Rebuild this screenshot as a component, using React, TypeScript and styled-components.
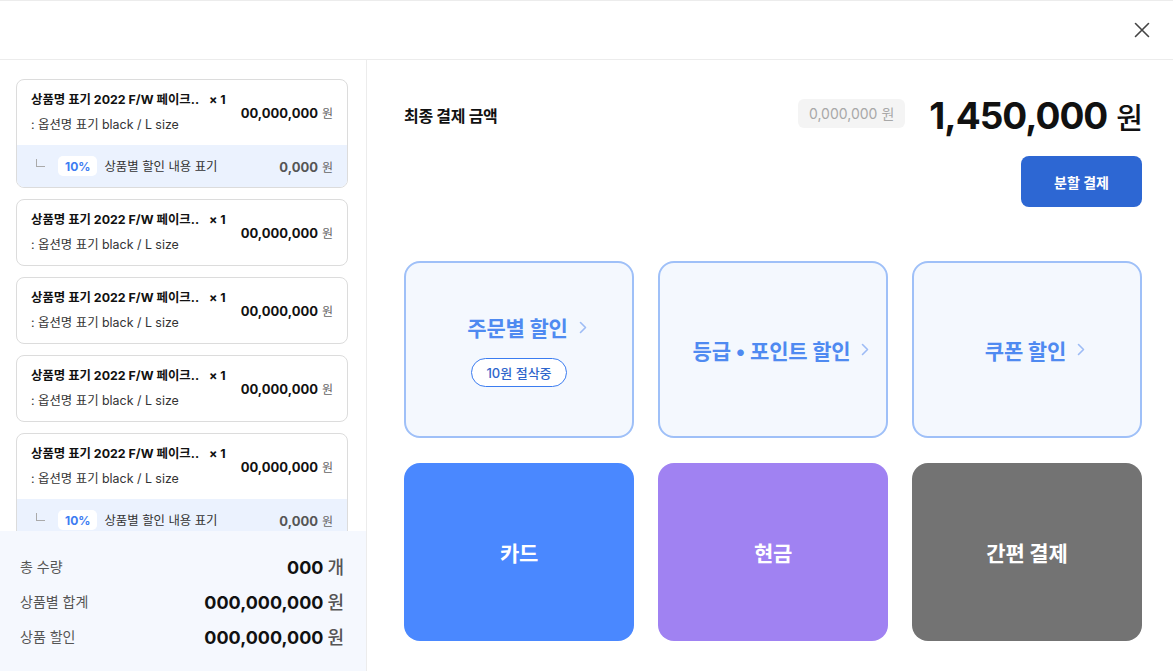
import React from "react";
import styled, { createGlobalStyle } from "styled-components";

const Global = createGlobalStyle`
  * { box-sizing: border-box; }
  html, body { margin: 0; padding: 0; background: #fff; }
  body { font-family: Inter, "Noto Sans CJK KR", sans-serif; color: #111; }
`;

const Page = styled.div`
  width: 1173px;
  height: 671px;
  display: flex;
  flex-direction: column;
  border-top: 1px solid #ececec;
  overflow: hidden;
`;

const Header = styled.header`
  height: 59px;
  flex: 0 0 59px;
  display: flex;
  align-items: center;
  justify-content: flex-end;
  padding-right: 22px;
  border-bottom: 1px solid #ececec;
`;

const CloseBtn = styled.button`
  border: 0;
  background: none;
  padding: 0;
  width: 18px;
  height: 18px;
  display: flex;
  align-items: center;
  justify-content: center;
  cursor: pointer;
`;

const Body = styled.div`
  flex: 1;
  display: flex;
  min-height: 0;
`;

const Left = styled.aside`
  width: 367px;
  flex: 0 0 367px;
  border-right: 1px solid #ececec;
  display: flex;
  flex-direction: column;
`;

const List = styled.div`
  flex: 1;
  overflow: hidden;
  padding: 19px 18px 0 16px;
  display: flex;
  flex-direction: column;
  gap: 11px;
`;

const ItemCard = styled.div`
  flex: 0 0 auto;
  border: 1px solid #dcdcdc;
  border-radius: 8px;
  overflow: hidden;
  background: #fff;
`;

const ItemMain = styled.div`
  height: 65px;
  display: flex;
  align-items: center;
  justify-content: space-between;
  padding: 0 14px 0 14px;
`;

const ItemInfo = styled.div`
  display: flex;
  flex-direction: column;
  gap: 7px;
  margin-top: -2px;
`;

const ItemTitle = styled.div`
  font-size: 12.4px;
  font-weight: 700;
  color: #111;
  white-space: nowrap;
  span { margin-left: 10px; }
`;

const ItemOption = styled.div`
  font-size: 12.4px;
  color: #333;
`;

const Price = styled.div<{ $muted?: boolean }>`
  font-size: 13px;
  font-weight: 700;
  color: ${(p) => (p.$muted ? "#555" : "#111")};
  white-space: nowrap;
  span {
    font-weight: 400;
    font-size: 12px;
    color: #666;
    margin-left: 4px;
  }
`;

const DiscountRow = styled.div`
  height: 42px;
  background: #ebf2fe;
  display: flex;
  align-items: center;
  padding: 0 14px 0 19px;
`;

const Corner = styled.i`
  width: 9px;
  height: 8px;
  border-left: 1px solid #aaa;
  border-bottom: 1px solid #aaa;
  margin-top: -6px;
  margin-right: 13px;
`;

const PctBadge = styled.span`
  background: #fff;
  color: #3d7cf2;
  font-size: 12px;
  font-weight: 700;
  height: 20px;
  padding: 0 7px;
  border-radius: 5px;
  display: inline-flex;
  align-items: center;
  margin-right: 7px;
`;

const DiscountText = styled.span`
  flex: 1;
  font-size: 12.4px;
  color: #333;
`;

const Summary = styled.div`
  flex: 0 0 140px;
  background: #f5f8fe;
  padding: 17px 22px 0 20px;
  display: flex;
  flex-direction: column;
`;

const SumRow = styled.div`
  height: 35px;
  display: flex;
  align-items: center;
  justify-content: space-between;
`;

const SumLabel = styled.span`
  font-size: 14px;
  color: #555;
`;

const SumValue = styled.span`
  font-size: 18px;
  font-weight: 700;
  color: #111;
  span {
    font-weight: 500;
    color: #555;
    margin-left: 4px;
  }
`;

const Right = styled.main`
  flex: 1;
  padding: 34px 31px 30px 37px;
  display: flex;
  flex-direction: column;
`;

const TotalRow = styled.div`
  display: flex;
  align-items: center;
  justify-content: space-between;
  height: 42px;
`;

const TotalLabel = styled.div`
  font-size: 16px;
  font-weight: 700;
  color: #111;
  letter-spacing: -0.3px;
`;

const TotalRightGroup = styled.div`
  display: flex;
  align-items: center;
  gap: 24px;
`;

const OrigPill = styled.div`
  background: #f4f4f4;
  color: #a8a8a8;
  font-size: 14px;
  height: 29px;
  padding: 0 11px;
  border-radius: 6px;
  display: flex;
  align-items: center;
  margin-top: -4px;
  span { margin-left: 4px; }
`;

const BigAmount = styled.div`
  font-size: 37px;
  font-weight: 700;
  color: #111;
  letter-spacing: -1px;
  display: flex;
  align-items: baseline;
  span {
    font-size: 29px;
    font-weight: 500;
    margin-left: 9px;
  }
`;

const SplitRow = styled.div`
  display: flex;
  justify-content: flex-end;
  margin-top: 20px;
`;

const SplitBtn = styled.button`
  width: 121px;
  height: 51px;
  border: 0;
  border-radius: 8px;
  background: #2d67d3;
  color: #fff;
  font-family: inherit;
  font-size: 14px;
  font-weight: 700;
  cursor: pointer;
`;

const Grid = styled.div`
  margin-top: 54px;
  display: grid;
  grid-template-columns: repeat(3, 1fr);
  grid-template-rows: 177px 178px;
  column-gap: 24px;
  row-gap: 25px;
`;

const DiscountTile = styled.button`
  border: 2px solid #9fc0f8;
  background: #f4f8fe;
  border-radius: 16px;
  display: flex;
  flex-direction: column;
  align-items: center;
  justify-content: center;
  gap: 16px;
  font-family: inherit;
  cursor: pointer;
  padding: 0;
`;

const TileTitle = styled.div`
  font-size: 21px;
  font-weight: 700;
  color: #4f8af1;
  display: flex;
  align-items: center;
  gap: 11px;
  letter-spacing: -0.2px;
  padding-left: 16px;
`;

const TrimBadge = styled.span`
  height: 29px;
  padding: 0 14px;
  border: 1px solid #3b7cf0;
  border-radius: 15px;
  background: #fff;
  color: #2f66cc;
  font-size: 13px;
  font-weight: 500;
  display: inline-flex;
  align-items: center;
`;

const PayTile = styled.button<{ $bg: string }>`
  border: 0;
  border-radius: 16px;
  background: ${(p) => p.$bg};
  color: #fff;
  font-family: inherit;
  font-size: 21px;
  font-weight: 700;
  cursor: pointer;
  letter-spacing: -0.2px;
`;

const Chevron = () => (
  <svg width="8" height="13" viewBox="0 0 8 13" fill="none">
    <path d="M1.5 1.5L6.5 6.5L1.5 11.5" stroke="#9dbcf5" strokeWidth="1.6" strokeLinecap="round" strokeLinejoin="round" />
  </svg>
);

type Item = { discount: boolean };
const items: Item[] = [
  { discount: true },
  { discount: false },
  { discount: false },
  { discount: false },
  { discount: true },
];

export default function App() {
  return (
    <>
      <Global />
      <Page>
        <Header>
          <CloseBtn aria-label="닫기">
            <svg width="16" height="16" viewBox="0 0 16 16" fill="none">
              <path d="M1.5 1.5L14.5 14.5M14.5 1.5L1.5 14.5" stroke="#444" strokeWidth="1.6" strokeLinecap="round" />
            </svg>
          </CloseBtn>
        </Header>
        <Body>
          <Left>
            <List>
              {items.map((it, i) => (
                <ItemCard key={i}>
                  <ItemMain>
                    <ItemInfo>
                      <ItemTitle>
                        상품명 표기 2022 F/W 페이크..<span>× 1</span>
                      </ItemTitle>
                      <ItemOption>: 옵션명 표기 black / L size</ItemOption>
                    </ItemInfo>
                    <Price>
                      00,000,000<span>원</span>
                    </Price>
                  </ItemMain>
                  {it.discount && (
                    <DiscountRow>
                      <Corner />
                      <PctBadge>10%</PctBadge>
                      <DiscountText>상품별 할인 내용 표기</DiscountText>
                      <Price $muted>
                        0,000<span>원</span>
                      </Price>
                    </DiscountRow>
                  )}
                </ItemCard>
              ))}
            </List>
            <Summary>
              <SumRow>
                <SumLabel>총 수량</SumLabel>
                <SumValue>
                  000<span>개</span>
                </SumValue>
              </SumRow>
              <SumRow>
                <SumLabel>상품별 합계</SumLabel>
                <SumValue>
                  000,000,000<span>원</span>
                </SumValue>
              </SumRow>
              <SumRow>
                <SumLabel>상품 할인</SumLabel>
                <SumValue>
                  000,000,000<span>원</span>
                </SumValue>
              </SumRow>
            </Summary>
          </Left>
          <Right>
            <TotalRow>
              <TotalLabel>최종 결제 금액</TotalLabel>
              <TotalRightGroup>
                <OrigPill>
                  0,000,000<span>원</span>
                </OrigPill>
                <BigAmount>
                  1,450,000<span>원</span>
                </BigAmount>
              </TotalRightGroup>
            </TotalRow>
            <SplitRow>
              <SplitBtn>분할 결제</SplitBtn>
            </SplitRow>
            <Grid>
              <DiscountTile>
                <TileTitle>
                  주문별 할인 <Chevron />
                </TileTitle>
                <TrimBadge>10원 절삭중</TrimBadge>
              </DiscountTile>
              <DiscountTile>
                <TileTitle>
                  등급 • 포인트 할인 <Chevron />
                </TileTitle>
              </DiscountTile>
              <DiscountTile>
                <TileTitle>
                  쿠폰 할인 <Chevron />
                </TileTitle>
              </DiscountTile>
              <PayTile $bg="#4a88ff">카드</PayTile>
              <PayTile $bg="#a082f2">현금</PayTile>
              <PayTile $bg="#737373">간편 결제</PayTile>
            </Grid>
          </Right>
        </Body>
      </Page>
    </>
  );
}
